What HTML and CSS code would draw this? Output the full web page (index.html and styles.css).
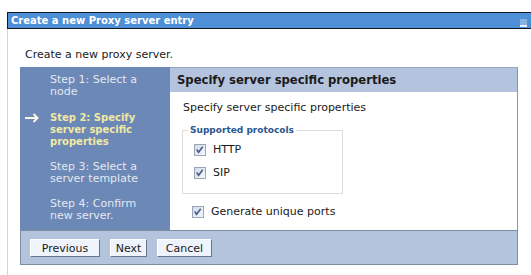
FILE: index.html
```html
<!DOCTYPE html>
<html lang="en">
<head>
    <meta charset="UTF-8">
    <title>Create a new Proxy server entry</title>
    <link rel="stylesheet" href="styles.css">
</head>
<body>
    <div class="portlet">
        <div class="portlet-title">
            <span>Create a new Proxy server entry</span>
            <span class="minimize"></span>
        </div>
        <div class="portlet-body">
            <p class="intro">Create a new proxy server.</p>

            <div class="wizard">
                <div class="wizard-main">
                    <ul class="steps">
                        <li class="step"><span class="marker"></span><span>Step 1: Select a node</span></li>
                        <li class="step current">
                            <span class="marker"><svg width="14" height="10" viewBox="0 0 14 10"><path d="M0 5 H12.5 M8.5 1 L12.5 5 L8.5 9" fill="none" stroke="#fbf7e2" stroke-width="2"/></svg></span>
                            <span>Step 2: Specify server specific properties</span>
                        </li>
                        <li class="step"><span class="marker"></span><span>Step 3: Select a server template</span></li>
                        <li class="step"><span class="marker"></span><span>Step 4: Confirm new server.</span></li>
                    </ul>

                    <div class="step-panel">
                        <div class="step-header">Specify server specific properties</div>
                        <div class="step-content">
                            <p class="step-desc">Specify server specific properties</p>

                            <fieldset class="group">
                                <legend>Supported protocols</legend>
                                <label class="check">
                                    <span class="box"><svg width="12" height="12" viewBox="0 0 12 12"><path d="M3 5.5 L5 8.5 L9.5 2.5" fill="none" stroke="#4b5f8e" stroke-width="1.8"/></svg></span>
                                    HTTP
                                </label>
                                <label class="check">
                                    <span class="box"><svg width="12" height="12" viewBox="0 0 12 12"><path d="M3 5.5 L5 8.5 L9.5 2.5" fill="none" stroke="#4b5f8e" stroke-width="1.8"/></svg></span>
                                    SIP
                                </label>
                            </fieldset>

                            <label class="check ports">
                                <span class="box"><svg width="12" height="12" viewBox="0 0 12 12"><path d="M3 5.5 L5 8.5 L9.5 2.5" fill="none" stroke="#4b5f8e" stroke-width="1.8"/></svg></span>
                                Generate unique ports
                            </label>
                        </div>
                    </div>
                </div>

                <div class="wizard-buttons">
                    <button class="btn btn-prev">Previous</button>
                    <button class="btn btn-next">Next</button>
                    <button class="btn btn-cancel">Cancel</button>
                </div>
            </div>
        </div>
    </div>
</body>
</html>
```

FILE: styles.css
```css
body {
    font-family: "DejaVu Sans", Verdana, sans-serif;
    font-size: 11px;
    line-height: 12px;
    color: #1a1a1a;
    background-color: #ffffff;
    margin: 0;
    padding: 0;
}
.portlet {
    margin: 12px 0 0 7px;
}
.portlet-title {
    display: flex;
    align-items: center;
    height: 15px;
    background-color: #4f8fd7;
    border: 1px solid #141820;
    border-right: none;
    color: #ffffff;
    font-weight: bold;
    font-size: 10px;
    padding-left: 3px;
}
.minimize {
    margin-left: auto;
    margin-right: 4px;
    margin-top: 4px;
    width: 7px;
    height: 6px;
    background-color: #86b1e2;
    border-bottom: 2px solid #e8f0fa;
}
.portlet-body {
    border-left: 1px solid #d4d4d4;
    padding: 20px 0 12px 12px;
}
.intro {
    margin: 0 0 6px 5px;
}
.wizard {
    width: 498px;
}
.wizard-main {
    display: flex;
    height: 163px;
}
.steps {
    list-style: none;
    margin: 0;
    padding: 7px 0 0 0;
    width: 150px;
    background-color: #6b88b6;
    color: #e3e8f1;
}
.step {
    display: flex;
    margin-bottom: 13px;
}
.step:first-child {
    margin-bottom: 14px;
}
.marker {
    flex: 0 0 25px;
    padding-left: 5px;
}
.marker svg {
    display: block;
    margin-top: 1px;
}
.step span:last-child {
    width: 100px;
}
.current {
    color: #f1e8a4;
    font-weight: bold;
    font-size: 10px;
}
.step-panel {
    flex: 1;
    border-top: 1px solid #97a5bd;
    border-right: 1px solid #8a97ad;
    background-color: #ffffff;
}
.step-header {
    height: 24px;
    line-height: 24px;
    background-color: #b4c4de;
    padding-left: 7px;
    font-weight: bold;
    font-size: 11.6px;
}
.step-content {
    padding: 10px 0 0 13px;
}
.step-desc {
    margin: 0;
}
.group {
    width: 148px;
    margin: 10px 0 0 -1px;
    padding: 0 0 14px 11px;
    border: 1px solid #dcdcdc;
}
.group legend {
    margin-left: -6px;
    padding: 0 2px;
    color: #2c5590;
    font-weight: bold;
    font-size: 9px;
}
.check {
    display: flex;
    align-items: center;
    height: 12px;
    margin-top: 8px;
}
.check + .check {
    margin-top: 11px;
}
.box {
    width: 10px;
    height: 10px;
    margin-right: 7px;
    border: 1px solid #9aa6b8;
    background: linear-gradient(135deg, #d3dbe7, #f6f8fb);
    display: flex;
}
.box svg {
    margin: -1px 0 0 -1px;
}
.ports {
    margin-top: 12px;
    margin-left: 9px;
}
.wizard-buttons {
    display: flex;
    gap: 10px;
    height: 33px;
    padding-left: 9px;
    background-color: #b5c4dd;
    border: 1px solid #7e8ca4;
    align-items: flex-start;
}
.btn {
    margin-top: 8px;
    height: 18px;
    padding: 0;
    font-family: "DejaVu Sans", Verdana, sans-serif;
    font-size: 11px;
    color: #1a1a1a;
    background-color: #eef3fc;
    border: 1px solid;
    border-color: #ffffff #67768c #67768c #ffffff;
}
.btn-prev {
    width: 70px;
}
.btn-next {
    width: 37px;
}
.btn-cancel {
    width: 55px;
}
```
